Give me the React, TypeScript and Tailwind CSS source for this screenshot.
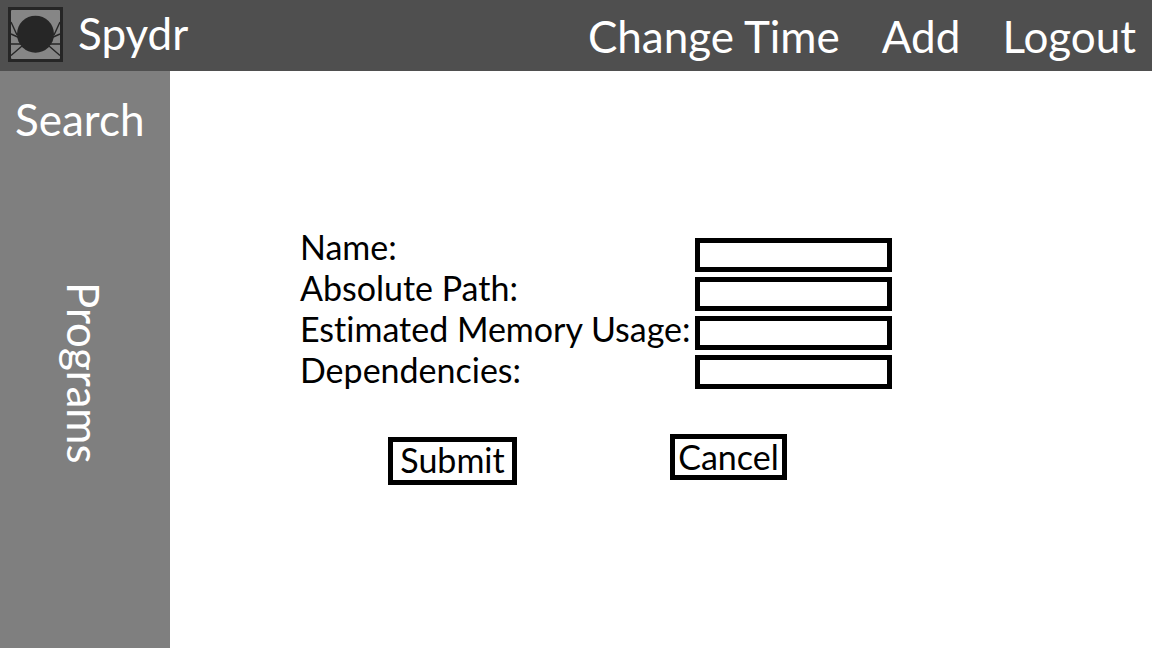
const fields = [
  { id: "name", label: "Name:" },
  { id: "path", label: "Absolute Path:" },
  { id: "memory", label: "Estimated Memory Usage:" },
  { id: "dependencies", label: "Dependencies:" },
];

function SpiderLogo() {
  return (
    <svg viewBox="0 0 55 55" className="h-[55px] w-[55px] shrink-0" aria-hidden="true">
      <rect width="55" height="55" fill="#262626" />
      <rect x="3" y="3" width="49" height="49" rx="1" fill="#868686" />
      <g stroke="#262626" strokeWidth="1.4" fill="none">
        <path d="M3 15 L9 28 M3 27 L12 31 M3 37 H14 M3 48.5 L14 39" />
        <path d="M52 15 L46 28 M52 27 L43 31 M52 37 H41 M52 48.5 L41 39" />
      </g>
      <circle cx="27.5" cy="27.2" r="18.5" fill="#262626" />
    </svg>
  );
}

export default function App() {
  return (
    <div className="flex min-h-screen flex-col bg-white font-['Lato',sans-serif] text-black [font-variant-ligatures:none]">
      <header className="flex h-[71px] items-center justify-between bg-[#4f4f4f] pr-4 pl-2 text-[44px] leading-[56px] text-white">
        <a href="#home" className="flex items-center gap-[15px] pb-0.5">
          <SpiderLogo />
          <span className="pb-1">Spydr</span>
        </a>
        <nav className="flex items-center gap-[42px]">
          <a href="#time">Change Time</a>
          <a href="#add">Add</a>
          <a href="#logout">Logout</a>
        </nav>
      </header>
      <div className="flex flex-1">
        <aside className="flex w-[170px] shrink-0 flex-col bg-[#7f7f7f] pt-5 text-[44px] leading-[56px] text-white">
          <a href="#search" className="pl-[15px]">Search</a>
          <a href="#programs" className="mt-[135px] ml-14 self-start [writing-mode:vertical-rl]">Programs</a>
        </aside>
        <main className="flex-1 pt-[155px] pl-[130px] text-[34px]">
          <form onSubmit={(e) => e.preventDefault()}>
            <div className="flex items-start">
              <div className="flex w-[395px] flex-col leading-[41px] whitespace-nowrap">
                {fields.map((f) => (
                  <label key={f.id} htmlFor={f.id}>{f.label}</label>
                ))}
              </div>
              <div className="flex w-[197px] flex-col gap-[5px] pt-3">
                {fields.map((f) => (
                  <input key={f.id} id={f.id} type="text" className="h-[34px] w-full border-5 border-black bg-white px-1 text-lg outline-none" />
                ))}
              </div>
            </div>
            <div className="mt-11 flex items-start gap-[153px] pl-[88px] leading-9">
              <button type="submit" className="mt-[3px] h-12 w-[129px] border-5 border-black pb-0.5">Submit</button>
              <button type="button" className="h-[46px] w-[117px] border-5 border-black pb-0.5">Cancel</button>
            </div>
          </form>
        </main>
      </div>
    </div>
  );
}
